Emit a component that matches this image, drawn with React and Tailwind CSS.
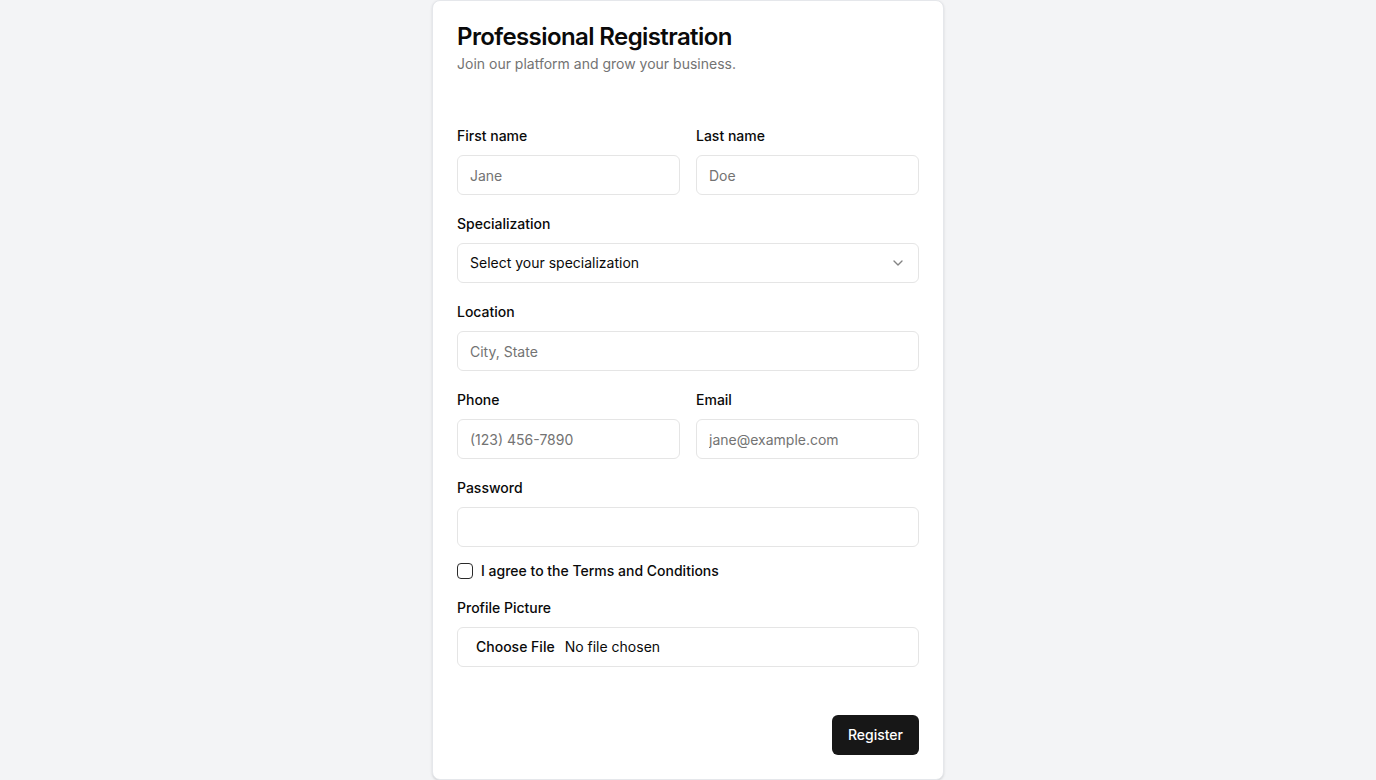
import React from "react";
import { ChevronDown } from "lucide-react";

const labelCls = "block text-sm font-medium leading-5 text-[#0a0a0a]";
const inputCls =
  "block h-10 w-full rounded-md border border-[#e5e5e5] bg-white px-3 py-2 text-sm text-[#0a0a0a] placeholder:text-[#737373] outline-none";

function Field({ label, children, className = "" }) {
  return (
    <div className={className}>
      <label className={labelCls}>{label}</label>
      <div className="mt-[9px]">{children}</div>
    </div>
  );
}

export default function App() {
  return (
    <div
      className="flex min-h-screen items-center justify-center bg-[#f3f4f6]"
      style={{ fontFamily: "Inter, 'Noto Sans', sans-serif" }}
    >
      <div className="w-[512px] rounded-lg border border-[#e5e7eb] bg-white shadow-sm">
        <div className="px-6 pt-6">
          <h1 className="text-2xl font-semibold leading-6 tracking-tight text-[#0a0a0a]">
            Professional Registration
          </h1>
          <p className="mt-[5px] text-sm leading-5 text-[#737373]">
            Join our platform and grow your business.
          </p>
        </div>
        <form className="px-6 pb-6 pt-[52px]" onSubmit={(e) => e.preventDefault()}>
          <div className="grid grid-cols-2 gap-4">
            <Field label="First name">
              <input className={inputCls} placeholder="Jane" />
            </Field>
            <Field label="Last name">
              <input className={inputCls} placeholder="Doe" />
            </Field>
          </div>
          <Field label="Specialization" className="mt-[19px]">
            <button
              type="button"
              className="flex h-10 w-full items-center justify-between rounded-md border border-[#e5e5e5] bg-white px-3 text-sm text-[#0a0a0a]"
            >
              <span>Select your specialization</span>
              <ChevronDown size={16} className="opacity-50" />
            </button>
          </Field>
          <Field label="Location" className="mt-[19px]">
            <input className={inputCls} placeholder="City, State" />
          </Field>
          <div className="mt-[19px] grid grid-cols-2 gap-4">
            <Field label="Phone">
              <input className={inputCls} placeholder="(123) 456-7890" />
            </Field>
            <Field label="Email">
              <input className={inputCls} placeholder="jane@example.com" />
            </Field>
          </div>
          <Field label="Password" className="mt-[19px]">
            <input type="password" className={inputCls} />
          </Field>
          <div className="mt-3.5 flex h-5 items-center gap-2">
            <span className="block h-4 w-4 rounded-[4px] border border-[#2a2a2a] bg-white" />
            <span className="text-sm font-medium leading-5 text-[#0a0a0a]">
              I agree to the Terms and Conditions
            </span>
          </div>
          <Field label="Profile Picture" className="mt-[17px]">
            <input
              type="file"
              className="block h-10 w-full rounded-md border border-[#e5e5e5] bg-white px-3 pb-[7px] pt-[9px] text-sm text-[#0a0a0a] file:mr-1 file:border-0 file:bg-transparent file:px-1.5 file:text-sm file:font-medium file:text-[#0a0a0a]"
            />
          </Field>
          <div className="mt-12 flex justify-end">
            <button
              type="submit"
              className="h-10 rounded-md bg-[#171717] px-4 text-sm font-medium text-white"
            >
              Register
            </button>
          </div>
        </form>
      </div>
    </div>
  );
}
